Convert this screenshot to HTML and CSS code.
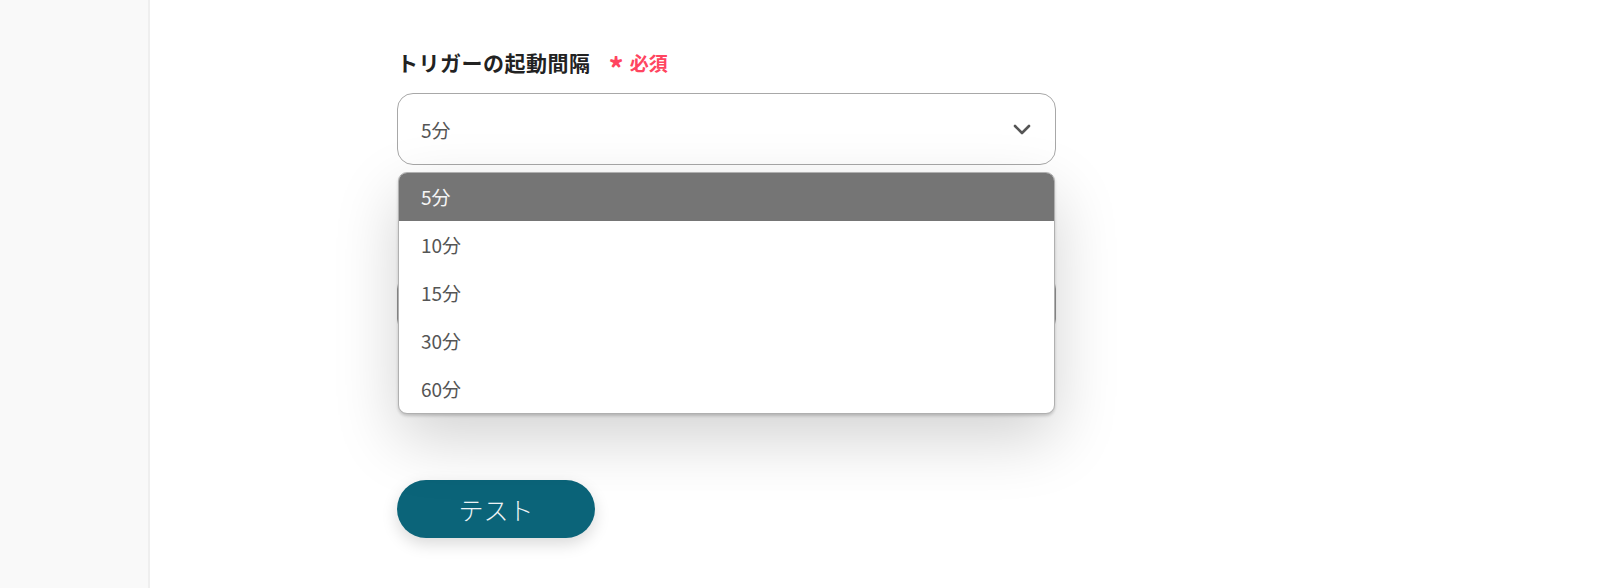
FILE: index.html
```html
<!doctype html>
<html lang="ja">
  <head>
    <meta charset="utf-8">
    <title>トリガー設定</title>
    <link rel="stylesheet" href="styles.css">
  </head>
  <body>
    <div class="page">
      <div class="sidebar"></div>
      <div class="main">
        <div class="field">
          <div class="field-label">トリガーの起動間隔<span class="req"><span class="req-mark">*</span>必須</span></div>
          <div class="select-wrap">
            <div class="select">
              <span class="select-value">5分</span>
              <svg class="chevron" width="18" height="11" viewBox="0 0 18 11"><path d="M2 2 L9 9 L16 2" fill="none" stroke="#555" stroke-width="2.6" stroke-linecap="round" stroke-linejoin="round"/></svg>
            </div>
            <ul class="dropdown">
              <li class="option active">5分</li>
              <li class="option">10分</li>
              <li class="option">15分</li>
              <li class="option">30分</li>
              <li class="option">60分</li>
            </ul>
          </div>
        </div>
        <div class="field field-hidden">
          <div class="field-label small">・</div>
          <div class="input"></div>
        </div>
        <button class="btn">テスト</button>
      </div>
    </div>
  </body>
</html>
```
FILE: styles.css
```css
/* base */
body {
    margin: 0;
    background: #fff;
    font-family: "Noto Sans CJK JP", "Noto Sans", sans-serif;
    color: #333;
}
ul { margin: 0; padding: 0; list-style: none; }

/* layout */
.page {
    display: flex;
    height: 588px;
    overflow: hidden;
}
.sidebar {
    width: 148px;
    flex-shrink: 0;
    background: #f9f9f9;
    border-right: 2px solid #efefef;
}
.main {
    flex: 1;
    padding: 45px 0 0 247px;
}

/* fields */
.field { width: 659px; }
.field-label {
    font-size: 21px;
    font-weight: bold;
    line-height: 34px;
    color: #222;
    letter-spacing: 0.5px;
}
.req {
    color: #ff4560;
    font-size: 19px;
    margin-left: 18px;
    letter-spacing: 0;
}
.req-mark {
    font-size: 30px;
    font-weight: bold;
    vertical-align: -9px;
    margin-right: 6px;
}
.select-wrap {
    position: relative;
    margin-top: 9px;
}
.select {
    box-sizing: border-box;
    height: 72px;
    border: 1px solid #a8a8a8;
    border-radius: 16px;
    display: flex;
    align-items: center;
    justify-content: space-between;
    padding: 0 24px 0 23px;
    background: #fff;
}
.select-value {
    font-size: 19px;
    color: #555;
}
.chevron { display: block; }

/* dropdown list */
.dropdown {
    position: absolute;
    top: 79px;
    left: 1px;
    right: 1px;
    background: #fff;
    border: 1px solid #b0b0b0;
    border-radius: 9px;
    overflow: hidden;
    z-index: 10;
    box-shadow: 0 2px 3px rgba(0,0,0,0.18), 0 24px 64px rgba(0,0,0,0.18);
}
.option {
    height: 48px;
    line-height: 48px;
    padding-left: 22px;
    font-size: 19px;
    color: #555;
}
.option.active {
    background: #757575;
    color: #f5f5f5;
}

/* field behind the list */
.field-hidden { margin-top: 62px; }
.field-label.small { font-size: 14px; line-height: 24px; }
.input {
    box-sizing: border-box;
    height: 62px;
    margin-top: 22px;
    border: 1px solid #999;
    border-radius: 16px;
}

/* button */
.btn {
    margin-top: 145px;
    width: 198px;
    height: 58px;
    border: none;
    border-radius: 29px;
    background: #0b6479;
    color: #eef3f5;
    font-family: "Noto Sans CJK JP", sans-serif;
    font-size: 25px;
    font-weight: 300;
    box-shadow: 0 6px 16px rgba(0,0,0,0.15);
    cursor: pointer;
}
```
